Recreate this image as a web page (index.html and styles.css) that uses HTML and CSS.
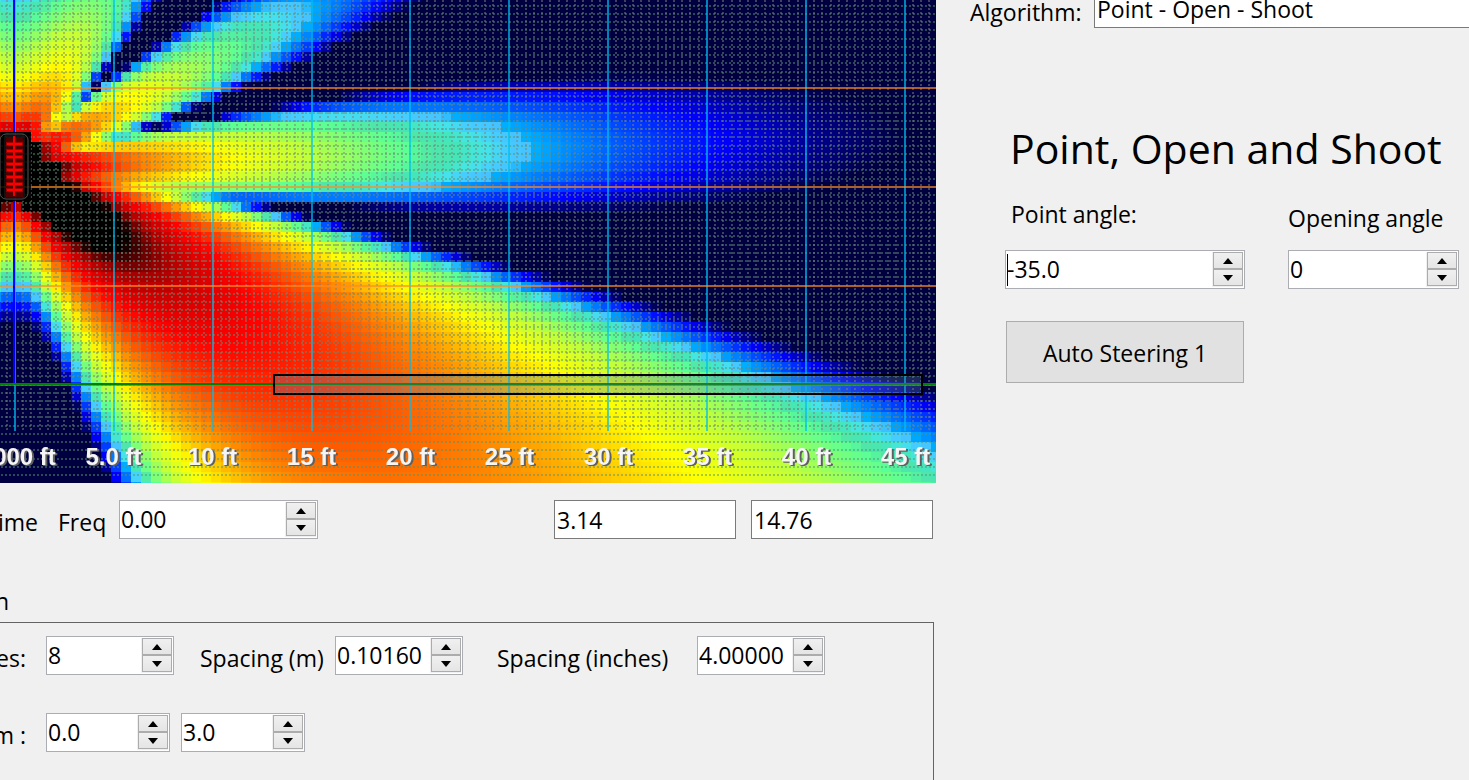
FILE: index.html
```html
<!DOCTYPE html>
<html lang="en">
<head>
    <meta charset="UTF-8">
    <meta name="viewport" content="width=device-width, initial-scale=1.0">
    <title>Array Simulator</title>
    <link rel="stylesheet" href="styles.css">
</head>
<body>
    <div class="app">
        <main class="left">
            <div class="plot">
                <canvas id="plot-canvas"></canvas>
                <div class="axis-labels">
                    <span>0.000 ft</span>
                    <span>5.0 ft</span>
                    <span>10 ft</span>
                    <span>15 ft</span>
                    <span>20 ft</span>
                    <span>25 ft</span>
                    <span>30 ft</span>
                    <span>35 ft</span>
                    <span>40 ft</span>
                    <span>45 ft</span>
                </div>
            </div>

            <div class="row toolbar">
                <span class="label time">ime</span>
                <label class="label freq-label" for="freq">Freq</label>
                <div class="spin freq">
                    <input type="number" id="freq" value="0.00" step="0.01">
                    <div class="arrows"><button class="up" aria-label="Up"></button><button class="down" aria-label="Down"></button></div>
                </div>
                <div class="readouts">
                    <input type="text" class="readout" value="3.14" aria-label="Level">
                    <input type="text" class="readout" value="14.76" aria-label="Distance">
                </div>
            </div>

            <div class="group-title">n</div>
            <section class="group">
                <div class="row">
                    <label class="label first" for="sources">es:</label>
                    <div class="spin medium">
                        <input type="number" id="sources" value="8">
                        <div class="arrows"><button class="up" aria-label="Up"></button><button class="down" aria-label="Down"></button></div>
                    </div>
                    <label class="label spacing-m" for="spacing-m">Spacing (m)</label>
                    <div class="spin medium">
                        <input type="number" id="spacing-m" value="0.10160" step="0.00001">
                        <div class="arrows"><button class="up" aria-label="Up"></button><button class="down" aria-label="Down"></button></div>
                    </div>
                    <label class="label spacing-in" for="spacing-in">Spacing (inches)</label>
                    <div class="spin medium">
                        <input type="number" id="spacing-in" value="4.00000" step="0.00001">
                        <div class="arrows"><button class="up" aria-label="Up"></button><button class="down" aria-label="Down"></button></div>
                    </div>
                </div>
                <div class="row">
                    <label class="label first" for="pos-x">m :</label>
                    <div class="spin small">
                        <input type="number" id="pos-x" value="0.0" step="0.1">
                        <div class="arrows"><button class="up" aria-label="Up"></button><button class="down" aria-label="Down"></button></div>
                    </div>
                    <div class="spin small next">
                        <input type="number" id="pos-y" value="3.0" step="0.1" aria-label="m">
                        <div class="arrows"><button class="up" aria-label="Up"></button><button class="down" aria-label="Down"></button></div>
                    </div>
                </div>
            </section>
        </main>

        <aside class="right">
            <div class="algorithm">
                <label for="algorithm">Algorithm:</label>
                <select id="algorithm">
                    <option>Point - Open - Shoot</option>
                </select>
            </div>

            <div class="steering">
                <h1>Point, Open and Shoot</h1>
                <div class="angles">
                    <div class="field">
                        <label for="point-angle">Point angle:</label>
                        <div class="spin">
                            <input type="number" id="point-angle" class="focused" value="-35.0" step="0.1">
                            <div class="arrows"><button class="up" aria-label="Up"></button><button class="down" aria-label="Down"></button></div>
                        </div>
                    </div>
                    <div class="field opening">
                        <label for="opening-angle">Opening angle</label>
                        <div class="spin">
                            <input type="number" id="opening-angle" value="0">
                            <div class="arrows"><button class="up" aria-label="Up"></button><button class="down" aria-label="Down"></button></div>
                        </div>
                    </div>
                </div>
                <button class="steer-btn">Auto Steering 1</button>
            </div>
        </aside>
    </div>
    <script src="plot.js"></script>
</body>
</html>
```
FILE: styles.css
```css
* {
    box-sizing: border-box;
    margin: 0;
    padding: 0;
}

body {
    font-family: "Open Sans", "Noto Sans", sans-serif;
    font-size: 23px;
    line-height: 32px;
    color: #000;
    background: #f0f0f0;
    overflow: hidden;
}

input,
select,
button {
    font: inherit;
    color: inherit;
    border-radius: 0;
    outline: none;
}

.app {
    display: grid;
    grid-template-columns: minmax(0, 1fr) 533px;
    height: 100vh;
}

.left {
    display: flex;
    flex-direction: column;
    min-width: 0;
}

/* Plot */
.plot {
    position: relative;
    height: 483px;
    flex-shrink: 0;
    overflow: hidden;
    background: #000040;
}

.plot canvas {
    display: block;
    width: 100%;
    height: 100%;
}

.axis-labels {
    position: absolute;
    left: -35px;
    bottom: 10px;
    display: flex;
    font-family: "Liberation Sans", Arial, sans-serif;
    font-size: 24px;
    font-weight: bold;
    color: #f5f5f5;
    text-shadow: 1px 1px 0 #606060, 2px 1px 0 #606060;
}

.axis-labels span {
    width: 99px;
    text-align: center;
    white-space: nowrap;
}

/* Rows of controls */
.row {
    display: flex;
}

.label {
    padding-top: 6px;
    white-space: nowrap;
}

.toolbar {
    margin-top: 17px;
    padding-right: 3px;
}

.label.time {
    display: flex;
    justify-content: flex-end;
    width: 38px;
    margin-right: 20px;
}

.freq-label {
    width: 61px;
}

.readouts {
    display: flex;
    gap: 15px;
    margin-left: auto;
}

.readout {
    width: 182px;
    height: 39px;
    padding: 0 2px;
    border: 1px solid #7a7a7a;
    background: #fff;
}

.spin {
    display: flex;
    height: 39px;
    padding: 1px;
    border: 1px solid #abadb3;
    background: #fff;
}

.spin input {
    flex: 1;
    min-width: 0;
    padding-bottom: 2px;
    border: none;
    background: transparent;
    appearance: textfield;
    -moz-appearance: textfield;
}

.spin input::-webkit-inner-spin-button,
.spin input::-webkit-outer-spin-button {
    appearance: none;
    margin: 0;
}

.spin input.focused {
    background: linear-gradient(#000, #000) left center / 1px 32px no-repeat;
}

.arrows {
    display: flex;
    flex-direction: column;
    width: 31px;
    padding-left: 1px;
    padding-bottom: 1px;
    background: #f0f0f0;
}

.arrows button {
    display: flex;
    align-items: center;
    justify-content: center;
    flex: 1;
    border: 1px solid #acacac;
    background: linear-gradient(#f0f0f0, #e5e5e5);
}

.arrows .up::before,
.arrows .down::before {
    content: "";
    border: 5px solid transparent;
}

.arrows .up::before {
    border-top: none;
    border-bottom: 6px solid #000;
}

.arrows .down::before {
    border-bottom: none;
    border-top: 6px solid #000;
}

.spin.freq {
    width: 199px;
}

.spin.medium {
    width: 128px;
}

.spin.small {
    width: 124px;
}

.spin.next {
    margin-left: 11px;
}

/* Group box */
.group-title {
    margin-top: 46px;
    margin-left: -5px;
}

.group {
    display: flex;
    flex: 1;
    flex-direction: column;
    gap: 38px;
    margin-top: 5px;
    margin-right: 2px;
    padding-top: 13px;
    border-top: 1px solid #646464;
    border-right: 1px solid #646464;
}

.label.first {
    display: flex;
    justify-content: flex-end;
    width: 46px;
    padding-right: 20px;
}

.label.spacing-m {
    width: 161px;
    padding-left: 26px;
}

.label.spacing-in {
    width: 234px;
    padding-left: 34px;
}

/* Right panel */
.algorithm {
    display: flex;
    height: 28px;
    padding-left: 34px;
}

.algorithm label {
    width: 124px;
    line-height: 24px;
}

.algorithm select {
    flex: 1;
    height: 39px;
    margin-top: -11px;
    padding: 0 2px;
    border: 1px solid #7a7a7a;
    border-right: none;
    background: #fff;
    appearance: none;
}

.steering {
    padding: 92px 10px 0 69px;
}

h1 {
    padding-left: 5px;
    font-size: 41px;
    font-weight: normal;
    line-height: 56px;
    white-space: nowrap;
}

.angles {
    display: flex;
    gap: 43px;
    margin-top: 22px;
}

.field {
    flex: 240;
    min-width: 0;
}

.field.opening {
    flex: 171;
}

.field label {
    display: block;
    height: 52px;
    padding-left: 6px;
    white-space: nowrap;
}

.field.opening label {
    padding-top: 4px;
    padding-left: 0;
}

.steer-btn {
    width: 238px;
    height: 62px;
    margin-top: 32px;
    margin-left: 1px;
    padding-top: 2px;
    border: 1px solid #adadad;
    background: #e1e1e1;
}
```
FILE: plot.js
```js
const canvas = document.getElementById('plot-canvas');
const ctx = canvas.getContext('2d');

const FT = 19.77;           // px per foot
const M = FT / 0.3048;      // px per metre
const ORIGIN = { x: 14, y: 166 };
const CELL = 10;

const array = { count: 8, spacing: 0.1016, angle: -35, freq: 1000 };

// level (dB) -> colour
const stops = [
    [-71.8, 0, 0, 64],
    [-70.9, 0, 0, 140],
    [-69.8, 0, 0, 255],
    [-68.1, 0, 110, 255],
    [-67.1, 0, 176, 255],
    [-67, 70, 195, 255],
    [-66.6, 70, 205, 255],
    [-66.2, 68, 230, 230],
    [-65.7, 68, 230, 185],
    [-65.2, 80, 230, 170],
    [-64.7, 90, 255, 150],
    [-62.1, 190, 255, 60],
    [-59.4, 255, 255, 0],
    [-55.5, 255, 150, 0],
    [-51.3, 255, 50, 0],
    [-49, 255, 0, 0],
    [-46.5, 210, 0, 0],
    [-45, 170, 0, 0],
    [-43.6, 90, 0, 0],
    [-42.4, 0, 0, 0]
];

function levelColor(db) {
    if (db <= stops[0][0]) return 'rgb(0, 0, 64)';
    for (let i = 1; i < stops.length; i++) {
        if (db < stops[i][0]) {
            const a = stops[i - 1];
            const b = stops[i];
            const t = (db - a[0]) / (b[0] - a[0]);
            const c = [1, 2, 3].map(n => Math.round(a[n] + (b[n] - a[n]) * t));
            return `rgb(${c.join(',')})`;
        }
    }
    return '#000';
}

// sources aim slightly down and get quieter straight above and below
function sourceGain(dy, r) {
    const s = dy / r;
    return 1 + 0.05 * s - (s > 0 ? 0.32 : 0.14) * Math.pow(s, 8);
}

function level(x, y) {
    const k = 2 * Math.PI * array.freq / 343;
    const s = Math.sin(-array.angle * Math.PI / 180);
    let re = 0;
    let im = 0;
    for (let i = 0; i < array.count; i++) {
        const offset = (i - (array.count - 1) / 2) * array.spacing;
        const dy = y - ORIGIN.y - offset * M;
        const r = Math.max(Math.hypot(x - ORIGIN.x, dy), 1);
        const phase = k * (r / M + offset * s);
        const amp = sourceGain(dy, r) / r;
        re += Math.cos(phase) * amp;
        im += Math.sin(phase) * amp;
    }
    return 20 * Math.log10(Math.hypot(re, im) / array.count);
}

function line(x1, y1, x2, y2, color, dash) {
    ctx.strokeStyle = color;
    ctx.lineWidth = 2;
    ctx.setLineDash(dash || []);
    ctx.beginPath();
    ctx.moveTo(x1, y1);
    ctx.lineTo(x2, y2);
    ctx.stroke();
    ctx.setLineDash([]);
}

function drawField(w, h) {
    for (let y = -8; y < h; y += CELL) {
        for (let x = -9; x < w; x += CELL) {
            ctx.fillStyle = levelColor(level(x + CELL / 2, y + CELL / 2));
            ctx.fillRect(x, y, CELL, CELL);
        }
    }
}

function drawGrid(w, h) {
    const major = 5 * FT;
    const minor = major / 12;
    for (let i = -10; 88 + i * minor < h; i++) {
        if (i % 12 === 0 && i < 36) continue;
        const y = Math.round(88 + i * minor);
        line(1, y, w, y, 'rgba(80, 150, 110, 0.5)', [2, 2]);
    }
    for (let i = -1; 15 + i * minor < w; i++) {
        if (i % 12 === 0) continue;
        const x = Math.round(15 + i * minor);
        line(x, 0, x, 430, 'rgba(128, 128, 128, 0.5)', [2, 2]);
    }
    for (let x = 15; x < w; x += major) {
        line(Math.round(x), 0, Math.round(x), 431, 'rgba(0, 190, 240, 0.68)');
    }
    for (let y = 88; y < 300; y += 99) {
        line(0, y, w, y, 'rgba(255, 140, 30, 0.68)');
    }
    line(0, 385, w, 385, 'rgba(200, 90, 30, 0.7)');
    line(14, 0, 14, 384, '#00f');
    line(0, 384, w, 384, '#008000');
}

function drawAudience(w) {
    ctx.fillStyle = 'rgba(90, 130, 160, 0.3)';
    ctx.fillRect(274, 375, w - 288, 19);
    ctx.strokeStyle = '#000';
    ctx.lineWidth = 2;
    ctx.strokeRect(274, 375, w - 288, 19);
}

function drawArray() {
    ctx.fillStyle = 'rgba(0, 0, 0, 0.85)';
    ctx.fillRect(0, 132, 31, 69);
    ctx.strokeStyle = '#555';
    ctx.lineWidth = 1;
    ctx.beginPath();
    ctx.roundRect(0, 134, 28, 65, 6);
    ctx.stroke();
    ctx.fillStyle = '#500000';
    ctx.fillRect(6, 137, 17, 60);
    ctx.strokeStyle = '#222';
    ctx.strokeRect(5, 136, 19, 62);
    for (let i = 0; i < array.count; i++) {
        const y = Math.round(ORIGIN.y - 24 + i * 6.6);
        ctx.fillStyle = '#a00000';
        ctx.fillRect(6, y, 17, 4);
        ctx.fillStyle = '#f00';
        ctx.fillRect(7, y + 1, 15, 2);
    }
    line(14, 136, 14, 196, '#f00000');
}

function draw() {
    canvas.width = canvas.clientWidth;
    canvas.height = canvas.clientHeight;
    drawField(canvas.width, canvas.height);
    drawGrid(canvas.width, canvas.height);
    drawAudience(canvas.width);
    drawArray();
}

document.querySelectorAll('.spin').forEach(spin => {
    const input = spin.querySelector('input');
    spin.querySelector('.up').addEventListener('click', () => input.stepUp());
    spin.querySelector('.down').addEventListener('click', () => input.stepDown());
});

window.addEventListener('resize', draw);
draw();
```
